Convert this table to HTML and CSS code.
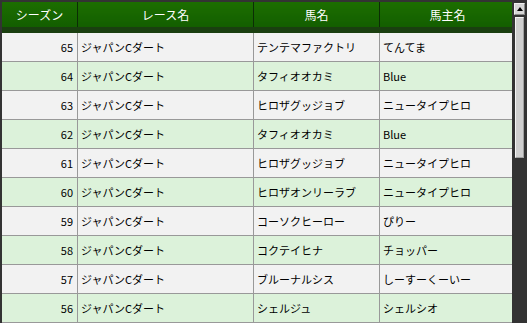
FILE: index.html
```html
<!DOCTYPE html>
<html lang="ja">
<head>
<meta charset="utf-8">
<link rel="stylesheet" href="styles.css">
</head>
<body>
<div class="frame">
  <div class="viewport">
    <table class="grid">
      <thead>
        <tr>
          <th class="c1">シーズン</th>
          <th class="c2">レース名</th>
          <th class="c3">馬名</th>
          <th class="c4">馬主名</th>
        </tr>
      </thead>
      <tbody>
        <tr class="odd"><td class="num">65</td><td>ジャパンCダート</td><td>テンテマファクトリ</td><td>てんてま</td></tr>
        <tr class="even"><td class="num">64</td><td>ジャパンCダート</td><td>タフィオオカミ</td><td>Blue</td></tr>
        <tr class="odd"><td class="num">63</td><td>ジャパンCダート</td><td>ヒロザグッジョブ</td><td>ニュータイプヒロ</td></tr>
        <tr class="even"><td class="num">62</td><td>ジャパンCダート</td><td>タフィオオカミ</td><td>Blue</td></tr>
        <tr class="odd"><td class="num">61</td><td>ジャパンCダート</td><td>ヒロザグッジョブ</td><td>ニュータイプヒロ</td></tr>
        <tr class="even"><td class="num">60</td><td>ジャパンCダート</td><td>ヒロザオンリーラブ</td><td>ニュータイプヒロ</td></tr>
        <tr class="odd"><td class="num">59</td><td>ジャパンCダート</td><td>コーソクヒーロー</td><td>ぴりー</td></tr>
        <tr class="even"><td class="num">58</td><td>ジャパンCダート</td><td>コクテイヒナ</td><td>チョッパー</td></tr>
        <tr class="odd"><td class="num">57</td><td>ジャパンCダート</td><td>ブルーナルシス</td><td>しーすーくーいー</td></tr>
        <tr class="even"><td class="num">56</td><td>ジャパンCダート</td><td>シェルジュ</td><td>シェルシオ</td></tr>
      </tbody>
    </table>
  </div>
  <div class="scrollbar">
    <div class="arrow-btn"><span class="tri"></span></div>
    <div class="thumb"></div>
  </div>
</div>
</body>
</html>
```
FILE: styles.css
```css
html, body {
  margin: 0;
  padding: 0;
  background: #333333;
  overflow: hidden;
}
.frame {
  display: flex;
  width: 527px;
  height: 323px;
  box-sizing: border-box;
  padding: 2px 0 0 2px;
  background: #333333;
}
.viewport {
  width: 510px;
  height: 321px;
  overflow: hidden;
  flex: none;
}
.grid {
  border-collapse: collapse;
  table-layout: fixed;
  width: 510px;
  font-family: "Noto Sans CJK JP", "Liberation Sans", sans-serif;
  font-size: 11px;
  color: #000;
}
.c1 { width: 75px; }
.c2 { width: 175px; }
.c3 { width: 125px; }
.c4 { width: 135px; }
.grid th {
  height: 25px;
  padding: 0;
  font-weight: normal;
  font-size: 12px;
  color: #ffffff;
  text-align: center;
  background: linear-gradient(#1c6e00, #135e00);
  border-bottom: 6px solid #1a3f10;
  border-left: 1px solid #0b2d05;
  line-height: 25px;
  vertical-align: middle;
}
.grid th:first-child { border-left: none; }
.grid td {
  height: 28px;
  padding: 0 3px;
  border-bottom: 1px solid #999999;
  border-left: 1px solid #999999;
  white-space: nowrap;
  overflow: hidden;
  vertical-align: middle;
  line-height: 16px;
}
.grid td:first-child { border-left: none; }
.grid td.num {
  text-align: right;
  padding-right: 4px;
}
.odd td { background: #f2f2f2; }
.even td { background: #dcf2da; }
.scrollbar {
  flex: none;
  width: 15px;
  height: 321px;
  display: flex;
  flex-direction: column;
  align-items: center;
  padding-top: 1px;
  box-sizing: border-box;
}
.arrow-btn {
  width: 11px;
  height: 12px;
  background: #d6d6d6;
  border-top: 1px solid #f0f0f0;
  border-left: 1px solid #f0f0f0;
  border-right: 1px solid #888;
  border-bottom: 1px solid #888;
  box-sizing: border-box;
  display: flex;
  align-items: center;
  justify-content: center;
}
.tri {
  width: 0;
  height: 0;
  border-left: 3px solid transparent;
  border-right: 3px solid transparent;
  border-bottom: 4px solid #000;
  margin-bottom: 1px;
}
.thumb {
  margin-top: 2px;
  width: 9px;
  height: 141px;
  background: #cfcfcf;
  border-left: 1px solid #f4f4f4;
  border-top: 1px solid #f4f4f4;
  border-right: 1px solid #a0a0a0;
  border-bottom: 1px solid #a0a0a0;
  box-sizing: border-box;
}
```
